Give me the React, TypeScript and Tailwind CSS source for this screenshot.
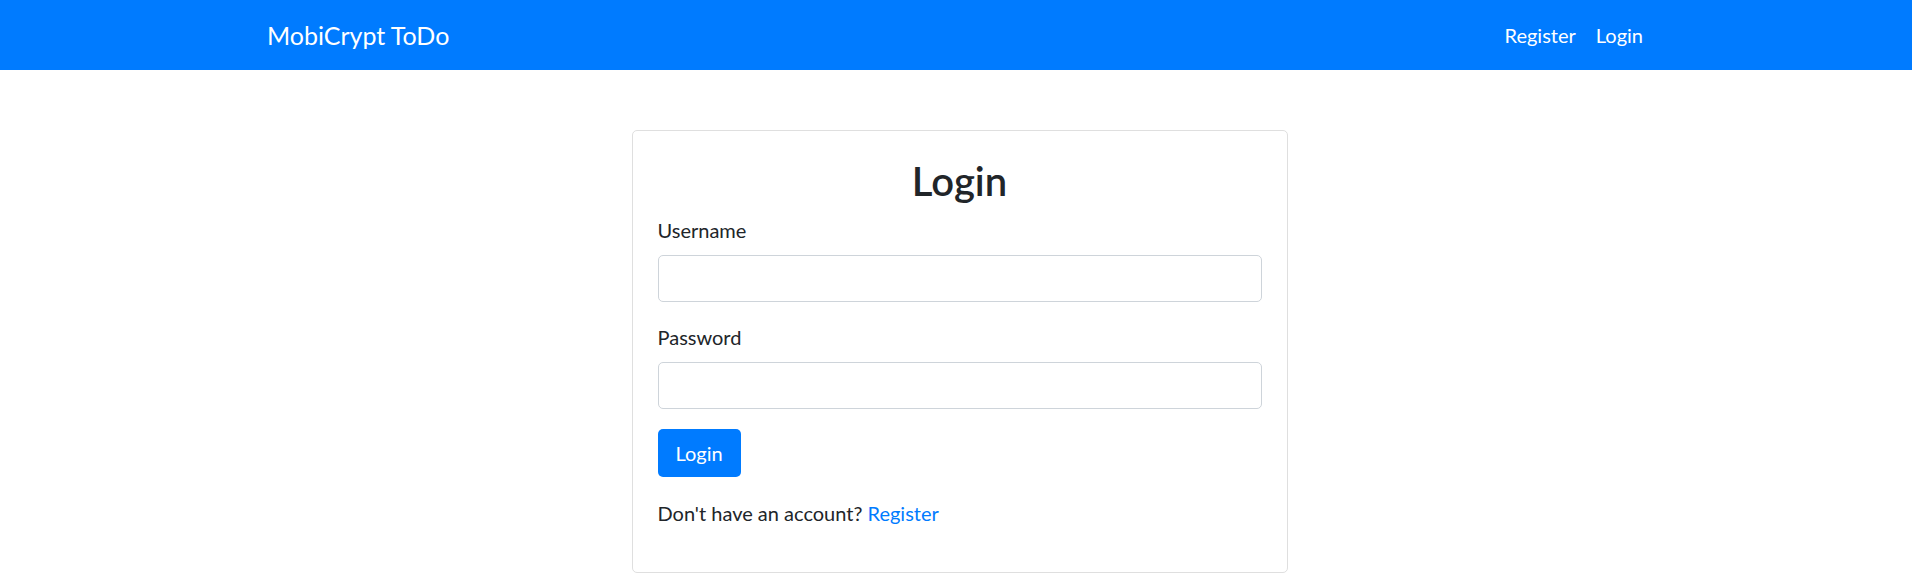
import React from "react";

export default function App() {
  return (
    <div
      className="min-h-[588px] bg-white text-[#212529]"
      style={{ fontFamily: '"Lato", "Open Sans", sans-serif' }}
    >
      <nav className="h-[70px] bg-[#007bff] flex items-center">
        <div className="w-full flex items-center justify-between pl-[267px] pr-[259px]">
          <a className="text-[25px] leading-[37px] text-white">MobiCrypt ToDo</a>
          <div className="flex items-center">
            <a className="text-[20px] leading-[30px] text-white px-[10px]">Register</a>
            <a className="text-[20px] leading-[30px] text-white px-[10px]">Login</a>
          </div>
        </div>
      </nav>
      <div className="flex justify-center pl-[7px] pt-[60px]">
        <div className="w-[656px] border border-[#dfdfdf] rounded-[5px] p-[25px]">
          <h2 className="text-[40px] leading-[48px] pt-[1px] font-semibold text-center mb-[10px]">Login</h2>
          <div className="mb-[20px]">
            <label className="block text-[20px] leading-[30px] mb-[10px]">Username</label>
            <input
              type="text"
              className="block w-full h-[47px] border border-[#ced4da] rounded-[5px] px-[15px] text-[20px] outline-none"
            />
          </div>
          <div className="mb-[20px]">
            <label className="block text-[20px] leading-[30px] mb-[10px]">Password</label>
            <input
              type="password"
              className="block w-full h-[47px] border border-[#ced4da] rounded-[5px] px-[15px] text-[20px] outline-none"
            />
          </div>
          <button className="h-[48px] px-[18px] bg-[#007bff] text-white text-[20px] leading-[30px] rounded-[5px]">
            Login
          </button>
          <p className="mt-[21px] mb-[19px] text-[20px] leading-[30px]">
            Don't have an account? <a className="text-[#007bff]">Register</a>
          </p>
        </div>
      </div>
    </div>
  );
}
